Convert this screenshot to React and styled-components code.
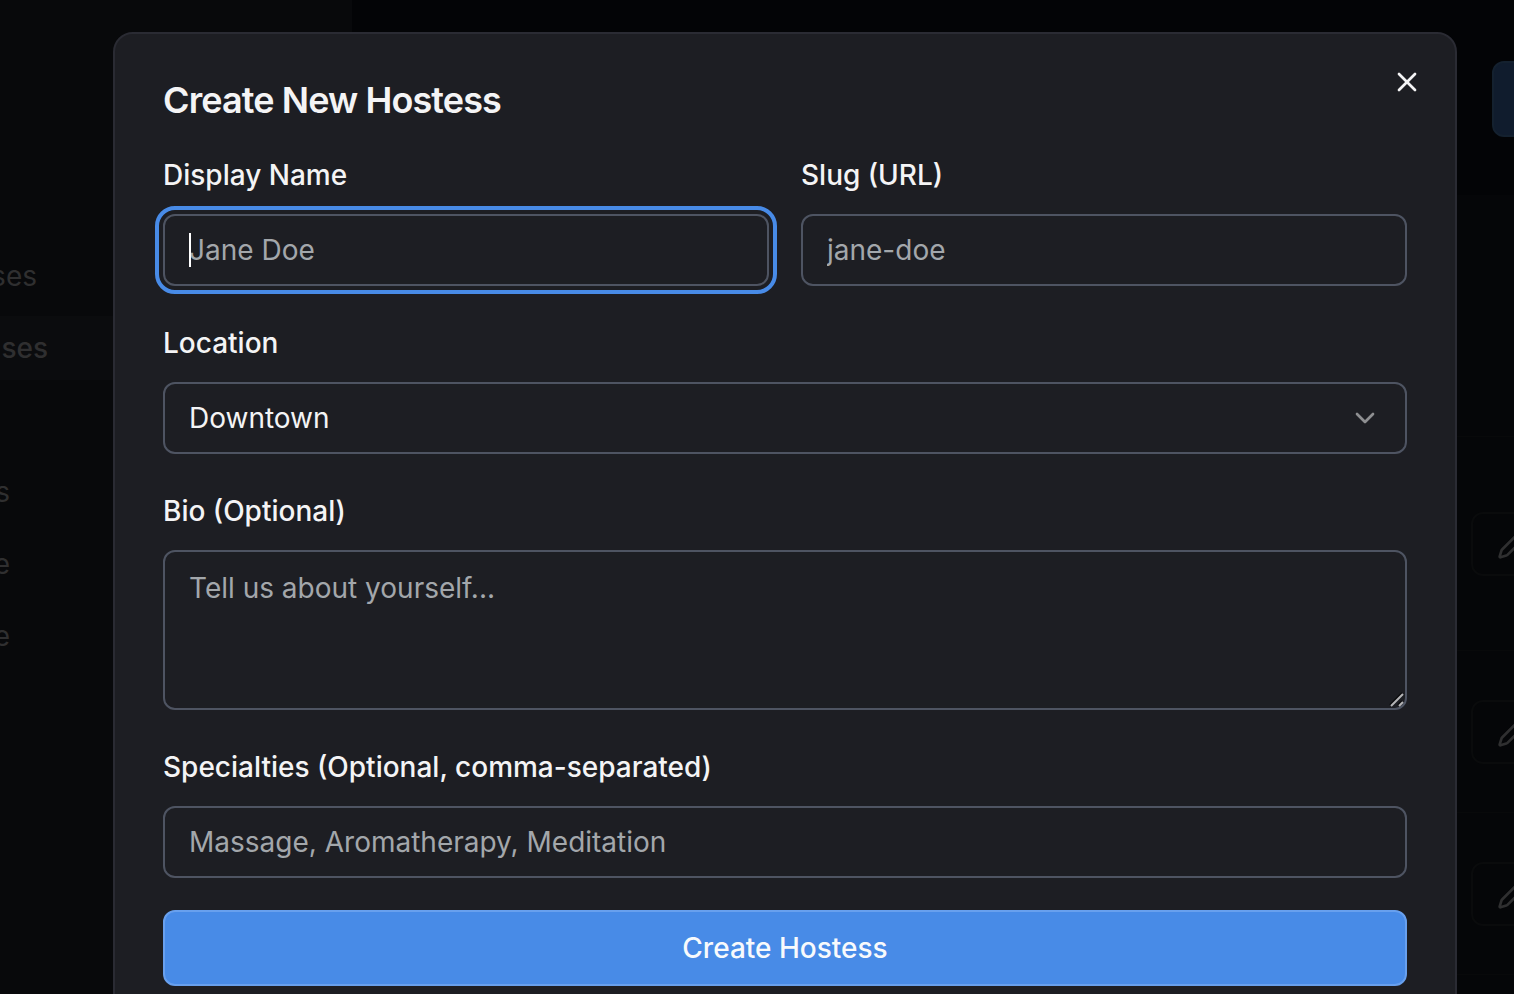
import React from 'react';
import styled, { createGlobalStyle } from 'styled-components';
import { X, ChevronDown, Pencil } from 'lucide-react';

const GlobalStyle = createGlobalStyle`
  *, *::before, *::after { box-sizing: border-box; }
  body {
    margin: 0;
    background: #030406;
    color: #f4f4f5;
    font-family: Inter, "Liberation Sans", sans-serif;
    font-size: 28px;
    -webkit-font-smoothing: antialiased;
  }
  button, input, select, textarea { font: inherit; color: inherit; }
`;

const Shell = styled.div`
  position: relative;
  display: flex;
  height: 100vh;
  overflow: hidden;
`;

const Sidebar = styled.nav`
  display: flex;
  flex-direction: column;
  gap: 8px;
  flex: 0 0 352px;
  padding-top: 244px;
  background: #08090b;
`;

const NavLink = styled.a`
  display: flex;
  align-items: center;
  height: 64px;
  color: #2f2f30;
  text-decoration: none;
  font-weight: ${(p) => (p.$active ? 500 : 400)};
  background: ${(p) => (p.$active ? '#0b0c0e' : 'transparent')};
`;

const NavText = styled.span`
  display: flex;
  justify-content: flex-end;
  width: ${(p) => p.$visible}px;
`;

const NavGap = styled.div`
  height: 64px;
`;

const Main = styled.main`
  display: flex;
  flex-direction: column;
  flex: 1 0 auto;
  margin-right: -64px;
  width: 0;
`;

const Header = styled.header`
  display: flex;
  align-items: flex-start;
  justify-content: flex-end;
  height: 195px;
  padding-top: 61px;
`;

const AddButton = styled.button`
  width: 86px;
  height: 76px;
  border: 2px solid #14212f;
  border-radius: 12px;
  background: #101c2d;
`;

const List = styled.div`
  flex: 1;
  background: #050608;
`;

const Row = styled.div`
  display: flex;
  align-items: center;
  justify-content: flex-end;
  height: ${(p) => p.$height}px;
  border-bottom: 1px solid #08090a;
`;

const EditButton = styled.button`
  display: flex;
  align-items: center;
  width: 107px;
  height: 64px;
  padding: 0 24px;
  border: 2px solid #0a0b0c;
  border-radius: 12px;
  background: transparent;
  color: #2f2f30;
`;

const Overlay = styled.div`
  position: absolute;
  inset: 0;
  padding: 32px 57px 0 113px;
`;

const Dialog = styled.section`
  position: relative;
  display: flex;
  flex-direction: column;
  gap: 32px;
  padding: 48px;
  border: 2px solid #2a2b33;
  border-radius: 20px;
  background: #1d1e23;
`;

const Title = styled.h2`
  margin: 0;
  font-size: 36px;
  line-height: 36px;
  font-weight: 600;
  letter-spacing: -0.025em;
`;

const CloseButton = styled.button`
  position: absolute;
  top: 32px;
  right: 32px;
  display: flex;
  padding: 0;
  border: 0;
  background: none;
`;

const Form = styled.form`
  display: flex;
  flex-direction: column;
  gap: 32px;
`;

const Columns = styled.div`
  display: grid;
  grid-template-columns: 1fr 1fr;
  gap: 32px;
`;

const Field = styled.div`
  display: flex;
  flex-direction: column;
  gap: 14px;
`;

const Label = styled.label`
  line-height: 50px;
  font-weight: 500;
`;

const Control = styled.div`
  position: relative;
  display: flex;
`;

const Input = styled.input`
  width: 100%;
  height: 72px;
  padding: 0 24px;
  border: 2px solid #4e5462;
  border-radius: 12px;
  background: transparent;
  outline: none;
  caret-color: transparent;
  &::placeholder { color: #a3a7ab; opacity: 1; }
  &:focus { outline: 4px solid #488be7; outline-offset: 4px; }
`;

const Caret = styled.span`
  position: absolute;
  left: 26px;
  top: 19px;
  width: 2px;
  height: 34px;
  background: #ffffff;
`;

const Select = styled(Input).attrs({ as: 'select' })`
  appearance: none;
`;

const Chevron = styled(ChevronDown)`
  position: absolute;
  right: 26px;
  top: 20px;
  color: #8e8f91;
  pointer-events: none;
`;

const TextArea = styled(Input).attrs({ as: 'textarea' })`
  height: 160px;
  padding: 16px 24px;
  line-height: 40px;
  resize: none;
`;

const Grip = styled.svg`
  position: absolute;
  right: 2px;
  bottom: 2px;
  pointer-events: none;
`;

const Submit = styled.button`
  height: 76px;
  border: 2px solid #68a0ee;
  border-radius: 12px;
  background: #488be7;
  color: #f8fafc;
  font-weight: 500;
`;

export default function App() {
  return (
    <>
      <GlobalStyle />
      <Shell>
        <Sidebar>
          <NavLink href="#"><NavText $visible={37}>ses</NavText></NavLink>
          <NavLink href="#" $active><NavText $visible={48}>ses</NavText></NavLink>
          <NavGap />
          <NavLink href="#"><NavText $visible={10}>s</NavText></NavLink>
          <NavLink href="#"><NavText $visible={10}>e</NavText></NavLink>
          <NavLink href="#"><NavText $visible={10}>e</NavText></NavLink>
        </Sidebar>
        <Main>
          <Header><AddButton type="button" aria-label="Add" /></Header>
          <List>
            {[242, 214, 162, 162].map((height, i) => (
              <Row key={i} $height={height}>
                {i > 0 && (
                  <EditButton type="button" aria-label="Edit"><Pencil size={32} /></EditButton>
                )}
              </Row>
            ))}
          </List>
        </Main>
        <Overlay>
          <Dialog role="dialog" aria-modal="true" aria-labelledby="dialog-title">
            <Title id="dialog-title">Create New Hostess</Title>
            <Form>
              <Columns>
                <Field>
                  <Label htmlFor="name">Display Name</Label>
                  <Control>
                    <Input id="name" placeholder="Jane Doe" autoFocus />
                    <Caret />
                  </Control>
                </Field>
                <Field>
                  <Label htmlFor="slug">Slug (URL)</Label>
                  <Input id="slug" placeholder="jane-doe" />
                </Field>
              </Columns>
              <Field>
                <Label htmlFor="location">Location</Label>
                <Control>
                  <Select id="location" defaultValue="Downtown">
                    <option>Downtown</option>
                  </Select>
                  <Chevron size={32} />
                </Control>
              </Field>
              <Field>
                <Label htmlFor="bio">Bio (Optional)</Label>
                <Control>
                  <TextArea id="bio" placeholder="Tell us about yourself..." />
                  <Grip width="16" height="16" viewBox="0 0 16 16" fill="none" strokeWidth="2">
                    <path d="M1 13 13 1M9 13l4-4" stroke="#0c0c0e" />
                    <path d="M2 14 14 2M10 14l4-4" stroke="#b4b4b6" />
                  </Grip>
                </Control>
              </Field>
              <Field>
                <Label htmlFor="specialties">Specialties (Optional, comma-separated)</Label>
                <Input id="specialties" placeholder="Massage, Aromatherapy, Meditation" />
              </Field>
              <Submit type="submit">Create Hostess</Submit>
            </Form>
            <CloseButton type="button" aria-label="Close"><X size={32} /></CloseButton>
          </Dialog>
        </Overlay>
      </Shell>
    </>
  );
}
